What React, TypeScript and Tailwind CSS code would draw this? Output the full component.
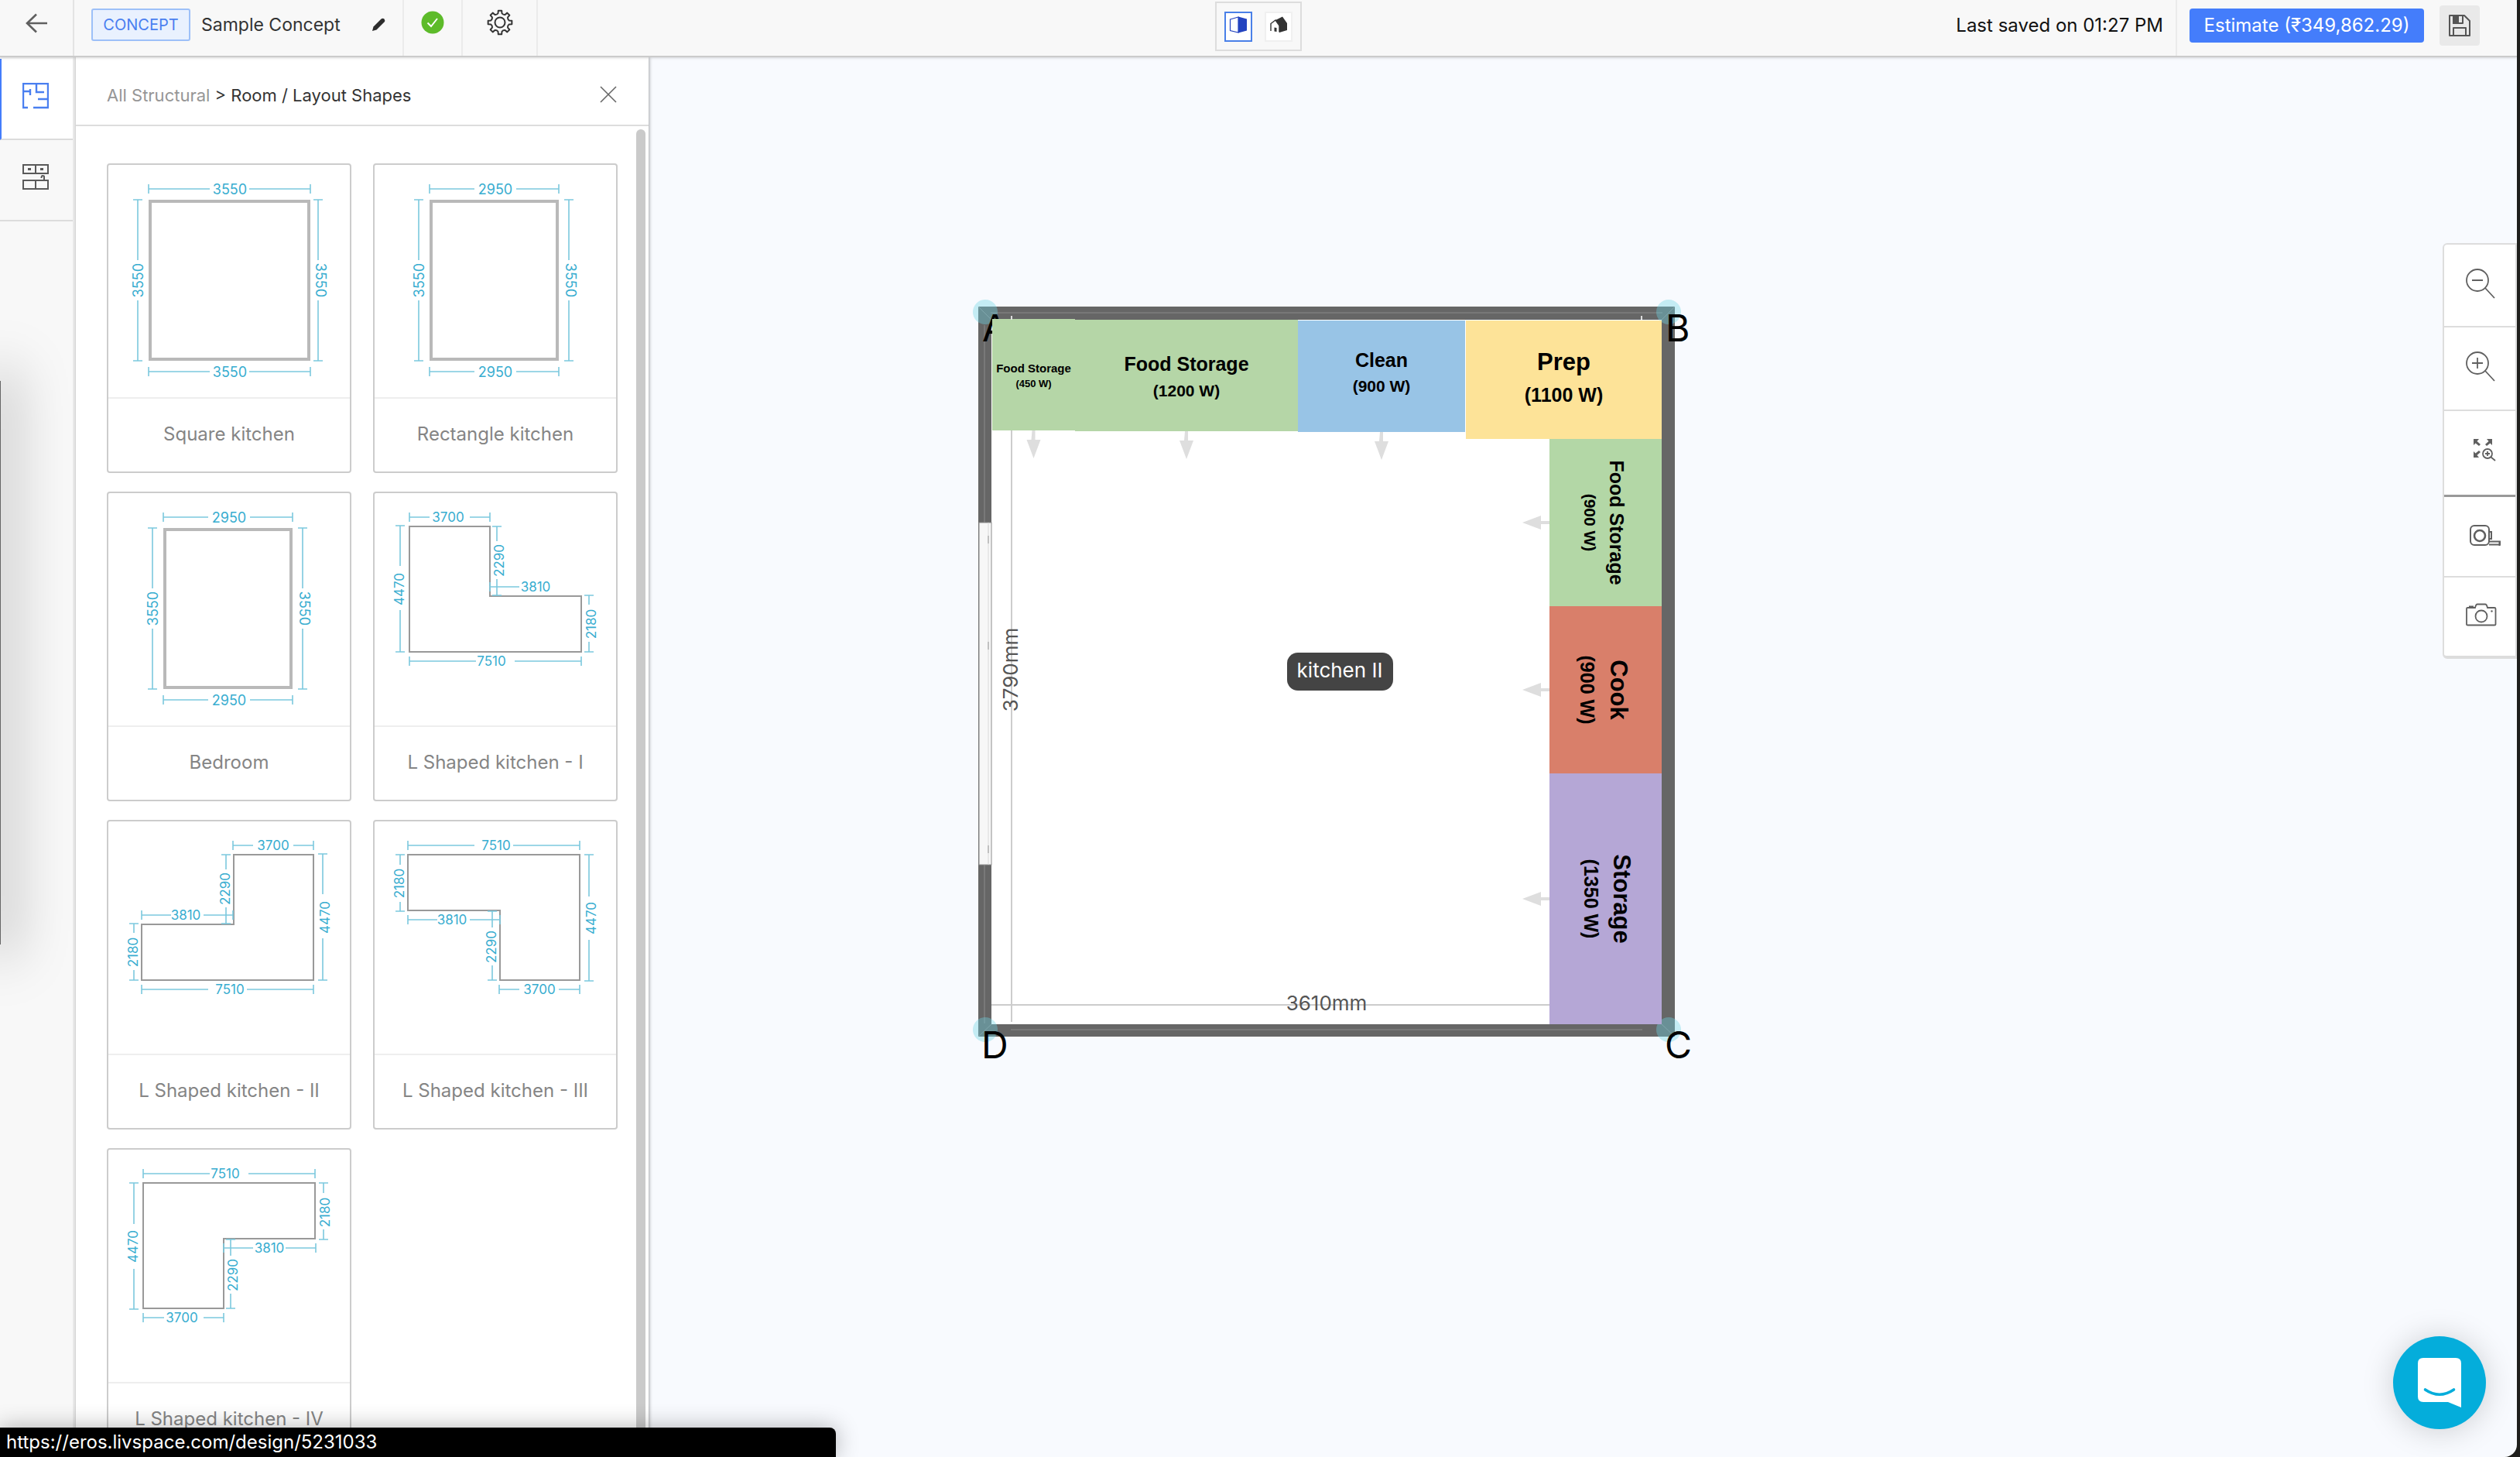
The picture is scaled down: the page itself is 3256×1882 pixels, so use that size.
import type { ReactNode } from "react";

type Dim = { o: "h" | "v"; at: number; from: number; to: number; gap: [number, number]; label: string; tx: number; ty: number; flip?: boolean; open?: boolean };
type Shape = { name: string; points: string; thick?: boolean; size: string; dims: Dim[] };

const h = (label: string, at: number, from: number, to: number, g0: number, g1: number, tx: number, open?: boolean): Dim => ({ o: "h", at, from, to, gap: [g0, g1], label, tx, ty: at, open });
const v = (label: string, at: number, from: number, to: number, g0: number, g1: number, tx: number, ty: number, flip?: boolean): Dim => ({ o: "v", at, from, to, gap: [g0, g1], label, tx, ty, flip });

const narrowRoom = {
  points: "73,47 236,47 236,251 73,251",
  thick: true,
  size: "text-[18px]",
  dims: [
    h("2950", 31, 71, 238, 129, 183, 156),
    h("2950", 267, 71, 238, 129, 183, 156),
    v("3550", 57, 45, 253, 123, 175, 57, 149),
    v("3550", 251, 45, 253, 123, 175, 253, 149, true),
  ],
};

const shapes: Shape[] = [
  {
    name: "Square kitchen",
    points: "54,47 259,47 259,251 54,251",
    thick: true,
    size: "text-[18px]",
    dims: [
      h("3550", 31, 52, 261, 131, 182, 157),
      h("3550", 267, 52, 261, 131, 182, 157),
      v("3550", 38, 45, 253, 123, 175, 38, 149),
      v("3550", 271, 45, 253, 123, 175, 274, 149, true),
    ],
  },
  { name: "Rectangle kitchen", ...narrowRoom },
  { name: "Bedroom", ...narrowRoom },
  {
    name: "L Shaped kitchen - I",
    points: "45,43 149,43 149,133 267,133 267,205 45,205",
    size: "text-[17px]",
    dims: [
      h("3700", 31, 45, 149, 71, 123, 95),
      v("4470", 33, 42, 205, 94, 151, 32, 124),
      v("2290", 158, 43, 132, 62, 111, 161, 87),
      h("3810", 121, 149, 229, 187, 229, 208, true),
      v("2180", 277, 132, 205, 144, 192, 280, 169),
      h("7510", 217, 45, 267, 131, 181, 151),
    ],
  },
  {
    name: "L Shaped kitchen - II",
    points: "162,43 265,43 265,205 43,205 43,133 162,133",
    size: "text-[17px]",
    dims: [
      h("3700", 31, 161, 265, 187, 239, 213),
      v("4470", 277, 42, 205, 94, 151, 280, 124),
      v("2290", 152, 43, 132, 62, 111, 151, 87),
      h("3810", 121, 43, 161, 81, 123, 100),
      v("2180", 33, 132, 205, 144, 192, 32, 169),
      h("7510", 217, 43, 265, 129, 179, 157),
    ],
  },
  {
    name: "L Shaped kitchen - III",
    points: "43,43 265,43 265,205 162,205 162,115 43,115",
    size: "text-[17px]",
    dims: [
      h("7510", 31, 43, 265, 129, 179, 157),
      v("2180", 33, 43, 116, 56, 104, 32, 80),
      h("3810", 127, 43, 162, 81, 123, 100),
      v("2290", 152, 116, 205, 137, 186, 151, 162),
      h("3700", 217, 161, 265, 187, 238, 213),
      v("4470", 277, 43, 206, 97, 153, 280, 125),
    ],
  },
  {
    name: "L Shaped kitchen - IV",
    points: "45,43 267,43 267,115 149,115 149,205 45,205",
    size: "text-[17px]",
    dims: [
      h("7510", 31, 45, 267, 131, 181, 151),
      v("4470", 33, 43, 206, 96, 154, 32, 125),
      v("2180", 278, 43, 116, 56, 103, 280, 81),
      h("3810", 127, 149, 268, 187, 229, 208),
      v("2290", 158, 116, 205, 137, 186, 161, 162),
      h("3700", 217, 45, 149, 72, 123, 95),
    ],
  },
];

function DimLine({ d }: { d: Dim }) {
  const horizontal = d.o === "h";
  const seg = (a: number, b: number) => (horizontal ? `M${a} ${d.at}H${b}` : `M${d.at} ${a}V${b}`);
  const tick = (p: number) => (horizontal ? `M${p} ${d.at - 6}V${d.at + 6}` : `M${d.at - 6} ${p}H${d.at + 6}`);
  const path = seg(d.from, d.gap[0]) + tick(d.from) + (d.open ? "" : seg(d.gap[1], d.to) + tick(d.to));
  return (
    <g>
      <path d={path} stroke="#7cc9de" strokeWidth="1.6" fill="none" />
      <text
        x={d.tx}
        y={d.ty}
        fill="#38add0"
        textAnchor="middle"
        dominantBaseline="central"
        transform={horizontal ? undefined : `rotate(${d.flip ? 90 : -90} ${d.tx} ${d.ty})`}
      >
        {d.label}
      </text>
    </g>
  );
}

function ShapeCard({ shape }: { shape: Shape }) {
  return (
    <button type="button" className="flex flex-col rounded-[4px] border-2 border-[#cccccc] bg-white">
      <svg viewBox="0 0 312 300" className={`${shape.size} w-full`} aria-hidden="true">
        <polygon points={shape.points} fill="#fff" stroke={shape.thick ? "#b9b9b9" : "#999"} strokeWidth={shape.thick ? 4 : 2} />
        {shape.dims.map((d, i) => (
          <DimLine key={i} d={d} />
        ))}
      </svg>
      <span className="flex h-24 w-full items-center justify-center border-t-2 border-[#eeeeee] pb-0.5 text-2xl text-[#858585]">{shape.name}</span>
    </button>
  );
}

type Cabinet = { name: string; width: string; x: number; y: number; w: number; h: number; fill: string; s1: number; s2: number; b1: number; b2: number; side?: boolean; arrow?: boolean };

const cabinets: Cabinet[] = [
  { name: "Food Storage", width: "(450 W)", x: 1282, y: 412, w: 107, h: 144, fill: "#b5d6a7", s1: 15, s2: 13, b1: 481, b2: 500, arrow: true },
  { name: "Food Storage", width: "(1200 W)", x: 1389, y: 413, w: 288, h: 144, fill: "#b5d6a7", s1: 25, s2: 21, b1: 479, b2: 512, arrow: true },
  { name: "Clean", width: "(900 W)", x: 1677, y: 414, w: 216, h: 144, fill: "#98c4e6", s1: 25, s2: 21, b1: 474, b2: 506, arrow: true },
  { name: "Prep", width: "(1100 W)", x: 1894, y: 414, w: 253, h: 153, fill: "#fde398", s1: 31, s2: 25, b1: 478, b2: 519 },
  { name: "Food Storage", width: "(900 W)", x: 2002, y: 567, w: 145, h: 216, fill: "#b3d7a6", s1: 25, s2: 21, b1: 2080, b2: 2047, side: true, arrow: true },
  { name: "Cook", width: "(900 W)", x: 2002, y: 783, w: 145, h: 216, fill: "#d97f6a", s1: 31, s2: 25, b1: 2081, b2: 2042, side: true, arrow: true },
  { name: "Storage", width: "(1350 W)", x: 2002, y: 999, w: 145, h: 324, fill: "#b5a7d6", s1: 31, s2: 25, b1: 2085, b2: 2047, side: true, arrow: true },
];

function CabinetBlock({ c }: { c: Cabinet }) {
  const cx = c.x + c.w / 2;
  const cy = c.y + c.h / 2;
  const bottom = c.y + c.h;
  const line = (text: string, size: number, base: number) =>
    c.side ? (
      <text fontSize={size} textAnchor="middle" transform={`translate(${base} ${cy}) rotate(90)`}>{text}</text>
    ) : (
      <text fontSize={size} textAnchor="middle" x={cx} y={base}>{text}</text>
    );
  return (
    <g>
      {c.arrow && !c.side && <path d={`M${cx - 2} ${bottom}h4v12h7l-9 24l-9 -24h6z`} fill="#dedede" />}
      {c.arrow && c.side && <path d={`M${c.x} ${cy - 2}h-11v-7l-24 9l24 9v-7h11z`} fill="#dedede" />}
      <rect x={c.x} y={c.y} width={c.w} height={c.h} fill={c.fill} />
      <g className="font-['Liberation_Sans',sans-serif] font-bold" fill="#000">
        {line(c.name, c.s1, c.b1)}
        {line(c.width, c.s2, c.b2)}
      </g>
    </g>
  );
}

const corners = [
  { label: "A", cx: 1273, cy: 403, x: 1269, y: 441 },
  { label: "B", cx: 2156, cy: 403, x: 2152, y: 441 },
  { label: "D", cx: 1273, cy: 1330, x: 1268, y: 1367 },
  { label: "C", cx: 2156, cy: 1330, x: 2151, y: 1367 },
];

function FloorPlan() {
  return (
    <svg viewBox="1240 370 960 1020" className="absolute left-[402px] top-[296px] h-[1020px] w-[960px]" role="img" aria-label="Floor plan of kitchen II">
      <rect x="1264" y="396" width="900" height="943" fill="#666" />
      <path d="M1280 404H2148M1272 420V675M1272 1117V1322M1306 1330H2122M1264 396L1281 413M2164 396L2147 413M1264 1339L1281 1323M2164 1339L2147 1323" stroke="#8a8a8a" strokeWidth="1" fill="none" />
      <rect x="1281" y="413" width="866" height="910" fill="#fff" />
      <rect x="1265" y="675" width="16" height="442" fill="#f7f7f7" stroke="#8c8c8c" strokeWidth="1" />
      <path d="M1277 675V1117" stroke="#d9d9d9" strokeWidth="1" />
      <path d="M1277 692v10M1277 829v10M1277 1092v10" stroke="#999" strokeWidth="1" />
      <path d="M1307 413V1320" stroke="#cccccc" strokeWidth="2" />
      <path d="M1281 1298H2002" stroke="#cccccc" strokeWidth="2" />
      {corners.map((c) => (
        <g key={c.label}>
          <circle cx={c.cx} cy={c.cy} r="16" fill="#6fd6e6" fillOpacity="0.38" />
          <text x={c.x} y={c.y} fontSize="48" fill="#000">{c.label}</text>
        </g>
      ))}
      {cabinets.map((c, i) => (
        <CabinetBlock key={i} c={c} />
      ))}
      <path d="M1307 408v5M2121 408v5" stroke="#ddd" strokeWidth="2" />
      <g fontSize="26" fill="#555" textAnchor="middle">
        <text x="1714" y="1305">3610mm</text>
        <text transform="translate(1315 865) rotate(-90)">3790mm</text>
      </g>
      <rect x="1663" y="843" width="137" height="49" rx="14" fill="#444" />
      <text x="1731" y="875" fontSize="26" fill="#fff" textAnchor="middle">kitchen II</text>
    </svg>
  );
}

function gearPath() {
  const parts: string[] = [];
  for (let i = 0; i < 8; i++) {
    const at = (deg: number, r: number) => {
      const a = ((i * 45 + deg) * Math.PI) / 180;
      return `${(17 + r * Math.sin(a)).toFixed(2)} ${(17 - r * Math.cos(a)).toFixed(2)}`;
    };
    parts.push(`${i === 0 ? "M" : "L"}${at(-12, 12)}L${at(-8, 15.5)}L${at(8, 15.5)}L${at(12, 12)}Q${at(22.5, 10.5)} ${at(33, 12)}`);
  }
  return parts.join("") + "Z";
}

function Header() {
  return (
    <header className="relative z-10 grid h-[74px] shrink-0 grid-cols-[1fr_auto_1fr] border-b-2 border-[#cbcbcb] bg-[#f8f8f8] shadow-[0_1px_3px_rgba(0,0,0,0.15)]">
      <div className="flex">
        <button type="button" aria-label="Back" className="flex w-24 items-center justify-center border-r-2 border-[#e4e4e4] pb-3">
          <svg width="28" height="26" viewBox="0 0 28 26" fill="none" stroke="#606060" strokeWidth="2.6"><path d="M28 13H2M14 1.500L2 13L14 24.500" /></svg>
        </button>
        <div className="flex items-center border-r-2 border-[#ebebeb] pb-2 pl-[22px] pr-[22px]">
          <span className="flex h-[42px] w-32 items-center justify-center rounded-[3px] border-2 border-[#9dc0f8] bg-[#e9f1fe] text-xl text-[#4a7ff0]">CONCEPT</span>
          <span className="ml-3.5 w-[220px] text-[23px] text-[#333333]">Sample Concept</span>
          <button type="button" aria-label="Rename">
            <svg width="18" height="18" viewBox="0 0 18 18"><path d="M1 17L2.500 11.500L12.500 1.500Q14.500 0 16.500 1.500Q18 3.500 16.500 5.500L6.500 15.500Z" fill="#2d2d2d" /></svg>
          </button>
        </div>
        <div className="flex w-[76px] items-center justify-center border-r-2 border-[#ebebeb] pb-3.5">
          <svg width="30" height="30" viewBox="0 0 30 30"><circle cx="15" cy="15" r="14.500" fill="#5dbb2a" /><path d="M8.500 15.500L13 20L21 10" fill="none" stroke="#fff" strokeWidth="2" /></svg>
        </div>
        <button type="button" aria-label="Settings" className="flex w-[97px] items-center justify-center border-r-2 border-[#ebebeb] pb-3.5">
          <svg width="34" height="34" viewBox="0 0 34 34" fill="none" stroke="#333" strokeWidth="2" strokeLinejoin="round"><path d={gearPath()} /><circle cx="17" cy="17" r="6.500" /></svg>
        </button>
      </div>
      <div className="mt-0.5 flex h-16 w-28 items-center justify-center gap-4 border-2 border-[#dddddd]">
        <button type="button" aria-label="2D view" className="flex h-[39px] w-9 items-center justify-center border-2 border-[#4a80e8] bg-white pb-1">
          <svg width="24" height="22" viewBox="0 0 24 22"><path d="M1.500 4L12 1V21L1.500 18.500Z" fill="#fff" stroke="#2444c0" strokeWidth="1.200" /><path d="M12 0.500L23 3.500V18.500L12 21.500Z" fill="#2444c0" /></svg>
        </button>
        <button type="button" aria-label="3D view" className="flex h-[39px] w-9 items-center justify-center border-2 border-[#f0f0f0] bg-white pb-1">
          <svg width="22" height="22" viewBox="0 0 22 22"><path d="M7 5L16 0.500L22 9V18L12 21V11Z" fill="#333" /><path d="M1 19V9.500L7 5L12 12V20.500" fill="#fff" stroke="#333" strokeWidth="1.400" /><path d="M5.500 14.500L8.500 15V20L5.500 19.500Z" fill="#333" /></svg>
        </button>
      </div>
      <div className="flex items-stretch justify-end">
        <span className="flex items-center border-r-2 border-[#ebebeb] pb-1.5 pr-4 text-2xl text-[#111111]">Last saved on 01:27 PM</span>
        <div className="flex items-center pb-1.5 pl-4 pr-12">
          <button type="button" className="h-11 w-[303px] rounded-[4px] bg-[#447dfb] text-2xl text-white">Estimate (₹349,862.29)</button>
          <button type="button" aria-label="Save" className="ml-5 flex h-[52px] w-[52px] items-center justify-center rounded-[4px] bg-[#e9e9e9]">
            <svg width="28" height="28" viewBox="0 0 28 28" fill="none" stroke="#555" strokeWidth="2" strokeLinejoin="round"><path d="M1 1H20L27 8V27H1Z" /><path d="M6 1V11H18V1" /><path d="M6 1H12V11H6Z" fill="#555" /><path d="M6 27V17H22V27" /></svg>
          </button>
        </div>
      </div>
    </header>
  );
}

function Rail() {
  return (
    <nav aria-label="Catalogue" className="w-[98px] shrink-0 border-r-4 border-[#ebebeb] bg-[#f8f8f8] pt-0.5">
      <button type="button" aria-label="Structural" className="flex h-[105px] w-full items-center justify-center border-b-2 border-l-2 border-b-[#dcdcdc] border-l-[#447dfb] bg-white pb-2 pr-1">
        <svg width="34" height="34" viewBox="0 0 34 34" fill="none" stroke="#4a7ff0" strokeWidth="2.400"><path d="M7 32H1V1H33V32H14M1 11H6M6 11H10M10 8V16M18 1V12H28M20 21H33" /></svg>
      </button>
      <button type="button" aria-label="Modules" className="flex h-[105px] w-full items-center justify-center border-b-2 border-[#dcdcdc] pb-2 pr-0.5">
        <svg width="34" height="34" viewBox="0 0 34 34" fill="none" stroke="#5a5a5a" strokeWidth="2"><path d="M1 1H33V12H1ZM17 1V12M1 21H33V32H1ZM17 21V32M28 21V16Q28 15 26 15Q24.500 15 24.500 18" /><path d="M7 6.500H11M23 6.500H27" strokeWidth="3" /></svg>
      </button>
    </nav>
  );
}

function ShapesPanel() {
  return (
    <aside className="z-[5] flex w-[740px] shrink-0 flex-col overflow-hidden bg-white shadow-[1px_0_4px_rgba(0,0,0,0.35)]">
      <div className="flex h-[89px] shrink-0 items-center justify-between border-b-2 border-[#dddddd] pl-10 pr-10 pt-3">
        <p className="text-[22px] text-[#333333]">
          <a href="#structural" className="text-[#969696]">All Structural</a> &gt; Room / Layout Shapes
        </p>
        <button type="button" aria-label="Close" className="pb-1">
          <svg width="24" height="24" viewBox="0 0 24 24" stroke="#666" strokeWidth="1.600"><path d="M2 2L22 22M22 2L2 22" /></svg>
        </button>
      </div>
      <div className="flex min-h-0 flex-1">
        <div className="mr-6 grid flex-1 grid-cols-2 content-start gap-x-7 gap-y-6 overflow-hidden pl-10 pt-12">
          {shapes.map((s) => (
            <ShapeCard key={s.name} shape={s} />
          ))}
        </div>
        <div className="mr-1 mt-1 w-3 rounded-t-full bg-[#cacaca]" />
      </div>
    </aside>
  );
}

function Tool({ label, className, children }: { label: string; className: string; children: ReactNode }) {
  return (
    <button type="button" aria-label={label} className={`flex w-full items-center justify-center ${className}`}>
      <svg width="48" height="48" viewBox="0 0 48 48" fill="none" stroke="#606060" strokeWidth="1.800" className="overflow-visible">{children}</svg>
    </button>
  );
}

function Toolbar() {
  return (
    <div className="absolute right-0 top-[240px] w-24 rounded-l-[6px] border-2 border-b-4 border-[#dddddd] bg-white">
      <Tool label="Zoom out" className="h-[107px] border-b-2 border-[#dddddd] pb-1.5">
        <circle cx="21" cy="20" r="14" /><path d="M14 20H28M31 30L43 43" />
      </Tool>
      <Tool label="Zoom in" className="h-[108px] border-b-2 border-[#dddddd] pb-1.5">
        <circle cx="21" cy="20" r="14" /><path d="M14 20H28M21 13V27M31 30L43 43" />
      </Tool>
      <Tool label="Zoom to fit" className="h-[111px] border-b-[3px] border-[#999999] pb-3">
        <path d="M16 12V20L18.500 17.500L23 21L25 19L20.500 15L23 12ZM40 12V20L37.500 17.500L33 21L31 19L35.500 15L33 12ZM16 36V28L18.500 30.500L23 27L25 29L20.500 33L23 36Z" fill="#606060" stroke="none" />
        <circle cx="34" cy="31" r="6" /><path d="M38.500 35.500L44 40M31 31H37M34 28V34" />
      </Tool>
      <Tool label="Measure" className="h-[104px] border-b-2 border-[#dddddd]">
        <rect x="12" y="10" width="24" height="25" rx="5" strokeWidth="2" /><circle cx="24" cy="23" r="7" strokeWidth="2.600" /><path d="M36 18H39V27H36M36 30.500H50V34.500H36M49.500 30V36" strokeWidth="2" />
      </Tool>
      <Tool label="Snapshot" className="h-[101px] pb-1">
        <path d="M7 15Q7 14 8.500 14H18Q19 9.500 21 9.500H31Q33 9.500 34 14H43Q44.500 14 44.500 15.500V35.500Q44.500 36.500 43 36.500H8.500Q7 36.500 7 35.500ZM10 12.500H16" />
        <circle cx="26" cy="25" r="7.500" /><circle cx="39.500" cy="18.500" r="1.200" fill="#606060" stroke="none" />
      </Tool>
    </div>
  );
}

export default function App() {
  return (
    <div className="h-screen bg-[#1f1f1c] pr-1 font-['Inter',sans-serif]">
      <div className="relative flex h-full flex-col overflow-hidden rounded-br-[16px] bg-[#f8fafe]">
        <Header />
        <div className="flex min-h-0 flex-1">
          <Rail />
          <ShapesPanel />
          <main className="relative flex-1 overflow-hidden">
            <FloorPlan />
            <Toolbar />
            <button type="button" aria-label="Open chat" className="absolute bottom-9 right-10 flex size-[120px] items-center justify-center rounded-full bg-[#04addb] shadow-[0_2px_40px_rgba(0,0,0,0.18)]">
              <svg width="56" height="64" viewBox="0 0 56 64"><path d="M7 0H49Q56 0 56 7V64L39 57H7Q0 57 0 50V7Q0 0 7 0Z" fill="#fff" /><path d="M9.500 41Q28 53.500 46.500 41" fill="none" stroke="#04addb" strokeWidth="3.600" strokeLinecap="round" /></svg>
            </button>
          </main>
        </div>
        <div className="absolute left-0 top-[492px] z-20 h-[728px] w-px bg-[#666666] shadow-[0_0_70px_16px_rgba(0,0,0,0.27)]" />
        <div className="absolute bottom-0 left-0 z-20 flex h-[38px] w-[1080px] items-center rounded-tr-[8px] bg-black pl-2 text-2xl text-white shadow-[0_0_30px_rgba(0,0,0,0.3)]">https://eros.livspace.com/design/5231033</div>
      </div>
    </div>
  );
}
